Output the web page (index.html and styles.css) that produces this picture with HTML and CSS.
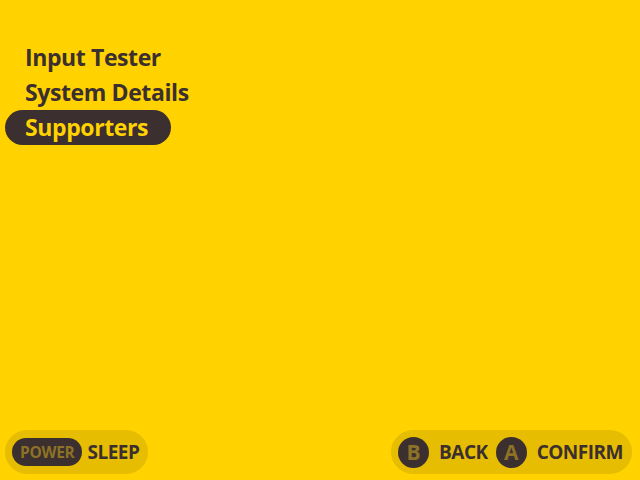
FILE: index.html
```html
<!DOCTYPE html>
<html>
<head>
<meta charset="utf-8">
<link rel="stylesheet" href="styles.css">
</head>
<body>
<div class="screen">
  <ul class="menu">
    <li class="item">Input Tester</li>
    <li class="item">System Details</li>
    <li class="item selected">Supporters</li>
  </ul>
  <div class="footer">
    <div class="hint">
      <span class="btn-pill">POWER</span>
      <span class="label">SLEEP</span>
    </div>
    <div class="hint">
      <span class="btn-circle">B</span>
      <span class="label">BACK</span>
      <span class="btn-circle">A</span>
      <span class="label">CONFIRM</span>
    </div>
  </div>
</div>
</body>
</html>
```
FILE: styles.css
```css
html, body {
  margin: 0;
  padding: 0;
}
body {
  background: #ffd200;
  font-family: "Open Sans", "DejaVu Sans", sans-serif;
  font-weight: 700;
  color: #3b2f2f;
}
.screen {
  width: 640px;
  height: 480px;
  display: flex;
  flex-direction: column;
  justify-content: space-between;
  box-sizing: border-box;
  padding: 40px 8px 6px 5px;
}
.menu {
  list-style: none;
  margin: 0;
  padding: 0;
  display: flex;
  flex-direction: column;
  align-items: flex-start;
}
.item {
  height: 35px;
  line-height: 34px;
  padding: 0 20px;
  font-size: 23px;
  letter-spacing: -0.4px;
  border-radius: 18px;
}
.item.selected {
  background: #3b2f2f;
  color: #ffd200;
  padding-right: 23px;
}
.footer {
  display: flex;
  justify-content: space-between;
  align-items: center;
}
.hint {
  display: flex;
  align-items: center;
  gap: 8px;
  height: 44px;
  padding: 0 9px 0 7px;
  background: #e6bd00;
  border-radius: 22px;
}
.btn-pill {
  height: 28px;
  line-height: 28px;
  padding: 0 8px;
  border-radius: 14px;
  background: #3b2f2f;
  color: #8c7226;
  font-size: 15.5px;
  letter-spacing: -0.3px;
  margin-right: -3px;
}
.btn-circle {
  width: 31px;
  height: 31px;
  line-height: 31px;
  border-radius: 50%;
  background: #3b2f2f;
  color: #8c7226;
  text-align: center;
  font-size: 21px;
  margin-right: 2px;
}
.label {
  font-size: 19px;
  letter-spacing: -0.5px;
  color: #3b2f2f;
}
```
